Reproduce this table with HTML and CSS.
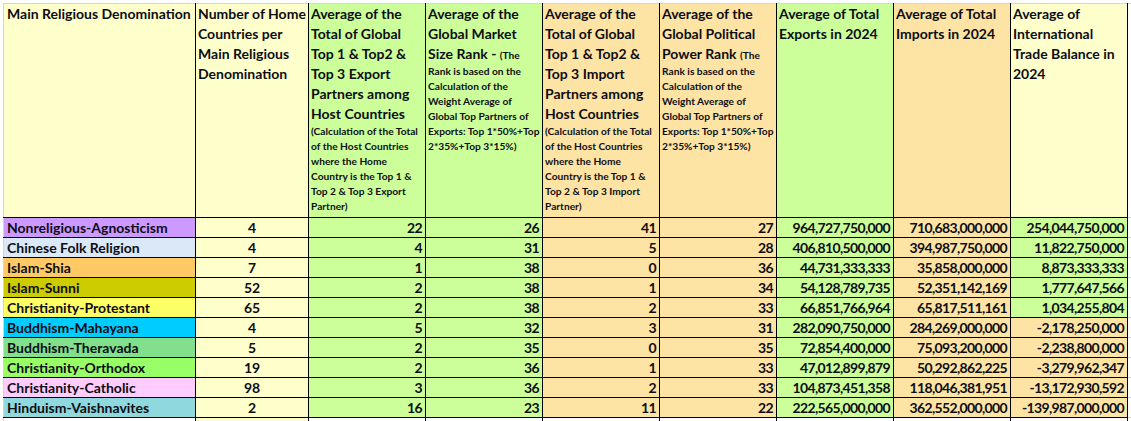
FILE: index.html
```html
<!DOCTYPE html>
<html lang="en">
<head>
<meta charset="utf-8">
<title>Religious Denomination Trade Table</title>
<link rel="stylesheet" href="styles.css">
</head>
<body>
<div class="sheet">
<table class="grid">
  <colgroup>
    <col class="c-name"><col class="c-num"><col class="c-std"><col class="c-std"><col class="c-std"><col class="c-std"><col class="c-std"><col class="c-std"><col class="c-std"><col class="c-extra">
  </colgroup>
  <thead>
    <tr class="head">
      <th class="yel"><span class="big">Main Religious Denomination</span></th>
      <th class="yel"><span class="big">Number of Home<br>Countries per<br>Main Religious<br>Denomination</span></th>
      <th class="grn"><span class="big">Average of the<br>Total of Global<br>Top 1 &amp; Top2 &amp;<br>Top 3 Export<br>Partners among<br>Host Countries</span><br>(Calculation of the Total<br>of the Host Countries<br>where the Home<br>Country is the Top 1 &amp;<br>Top 2 &amp; Top 3 Export<br>Partner)</th>
      <th class="grn active"><span class="big">Average of the<br>Global Market<br>Size Rank - </span>(The<br>Rank is based on the<br>Calculation of the<br>Weight Average of<br>Global Top Partners of<br>Exports: Top 1*50%+Top<br>2*35%+Top 3*15%)</th>
      <th class="tan"><span class="big">Average of the<br>Total of Global<br>Top 1 &amp; Top2 &amp;<br>Top 3 Import<br>Partners among<br>Host Countries</span><br>(Calculation of the Total<br>of the Host Countries<br>where the Home<br>Country is the Top 1 &amp;<br>Top 2 &amp; Top 3 Import<br>Partner)</th>
      <th class="tan"><span class="big">Average of the<br>Global Political<br>Power Rank </span>(The<br>Rank is based on the<br>Calculation of the<br>Weight Average of<br>Global Top Partners of<br>Exports: Top 1*50%+Top<br>2*35%+Top 3*15%)</th>
      <th class="grn"><span class="big">Average of Total<br>Exports in 2024</span></th>
      <th class="tan"><span class="big">Average of Total<br>Imports in 2024</span></th>
      <th class="yel"><span class="big">Average of<br>International<br>Trade Balance in<br>2024</span></th>
      <th class="blank"></th>
    </tr>
  </thead>
  <tbody>
    <tr><td class="name r-lav">Nonreligious-Agnosticism</td><td class="cnt">4</td><td class="grn">22</td><td class="grn">26</td><td class="tan">41</td><td class="tan">27</td><td class="grn">964,727,750,000</td><td class="tan">710,683,000,000</td><td class="grn">254,044,750,000</td><td class="blank"></td></tr>
    <tr><td class="name r-sky">Chinese Folk Religion</td><td class="cnt">4</td><td class="grn">4</td><td class="grn">31</td><td class="tan">5</td><td class="tan">28</td><td class="grn">406,810,500,000</td><td class="tan">394,987,750,000</td><td class="grn">11,822,750,000</td><td class="blank"></td></tr>
    <tr><td class="name r-org">Islam-Shia</td><td class="cnt">7</td><td class="grn">1</td><td class="grn">38</td><td class="tan">0</td><td class="tan">36</td><td class="grn">44,731,333,333</td><td class="tan">35,858,000,000</td><td class="grn">8,873,333,333</td><td class="blank"></td></tr>
    <tr><td class="name r-olv">Islam-Sunni</td><td class="cnt">52</td><td class="grn">2</td><td class="grn">38</td><td class="tan">1</td><td class="tan">34</td><td class="grn">54,128,789,735</td><td class="tan">52,351,142,169</td><td class="grn">1,777,647,566</td><td class="blank"></td></tr>
    <tr><td class="name r-yel">Christianity-Protestant</td><td class="cnt">65</td><td class="grn">2</td><td class="grn">38</td><td class="tan">2</td><td class="tan">33</td><td class="grn">66,851,766,964</td><td class="tan">65,817,511,161</td><td class="grn">1,034,255,804</td><td class="blank"></td></tr>
    <tr><td class="name r-cyn">Buddhism-Mahayana</td><td class="cnt">4</td><td class="grn">5</td><td class="grn">32</td><td class="tan">3</td><td class="tan">31</td><td class="grn">282,090,750,000</td><td class="tan">284,269,000,000</td><td class="tan">-2,178,250,000</td><td class="blank"></td></tr>
    <tr><td class="name r-mnt">Buddhism-Theravada</td><td class="cnt">5</td><td class="grn">2</td><td class="grn">35</td><td class="tan">0</td><td class="tan">35</td><td class="grn">72,854,400,000</td><td class="tan">75,093,200,000</td><td class="tan">-2,238,800,000</td><td class="blank"></td></tr>
    <tr><td class="name r-lim">Christianity-Orthodox</td><td class="cnt">19</td><td class="grn">2</td><td class="grn">36</td><td class="tan">1</td><td class="tan">33</td><td class="grn">47,012,899,879</td><td class="tan">50,292,862,225</td><td class="tan">-3,279,962,347</td><td class="blank"></td></tr>
    <tr><td class="name r-pnk">Christianity-Catholic</td><td class="cnt">98</td><td class="grn">3</td><td class="grn">36</td><td class="tan">2</td><td class="tan">33</td><td class="grn">104,873,451,358</td><td class="tan">118,046,381,951</td><td class="tan">-13,172,930,592</td><td class="blank"></td></tr>
    <tr><td class="name r-tea">Hinduism-Vaishnavites</td><td class="cnt">2</td><td class="grn">16</td><td class="grn">23</td><td class="tan">11</td><td class="tan">22</td><td class="grn">222,565,000,000</td><td class="tan">362,552,000,000</td><td class="tan">-139,987,000,000</td><td class="blank"></td></tr>
    <tr class="tail"><td class="name"></td><td class="cnt"></td><td></td><td></td><td></td><td></td><td></td><td></td><td></td><td class="blank"></td></tr>
  </tbody>
</table>
</div>
</body>
</html>
```

FILE: styles.css
```css
html, body {
  margin: 0;
  padding: 0;
  background: #ffffff;
  overflow: hidden;
}

.sheet {
  padding: 3px 0 0 3px;
  font-family: Lato, "Open Sans", sans-serif;
  font-weight: 700;
  color: #0d0d14;
}

.grid {
  border-collapse: collapse;
  table-layout: fixed;
  width: 1134px;
}

.c-name { width: 192px; }
.c-num { width: 113px; }
.c-std { width: 117px; }
.c-extra { width: 10px; }

.grid th,
.grid td {
  border: 1px solid #000000;
  padding: 0 3px 0 3px;
  overflow: hidden;
  white-space: nowrap;
}

.head th {
  height: 213px;
  vertical-align: top;
  text-align: left;
  font-size: 10.2px;
  line-height: 15px;
  font-weight: 700;
  padding-left: 2px;
  padding-right: 0;
  border-top-color: #d4d4d4;
}

.head th:first-child {
  border-left-color: #d4d4d4;
  padding-left: 3px;
}

.big {
  font-size: 14px;
  line-height: 20px;
}

.active {
  box-shadow: 0 -2px 0 #217346;
}

.grid tbody td {
  height: 19px;
  font-size: 14px;
  line-height: 19px;
  vertical-align: bottom;
  text-align: right;
  letter-spacing: -0.65px;
}

.grid tbody td.name {
  text-align: left;
  padding-left: 3px;
  letter-spacing: 0;
  border-left-color: #d4d4d4;
}

.grid tbody td.cnt {
  text-align: center;
  letter-spacing: 0;
  background: #ffffcc;
}

.yel { background: #ffffcc; }
.grn { background: #ccff99; }
.tan { background: #fde4a4; }

.r-lav { background: #cc99ff; }
.r-sky { background: #dbe8f7; }
.r-org { background: #ffc966; }
.r-olv { background: #cccc00; }
.r-yel { background: #ffff66; }
.r-cyn { background: #00ccff; }
.r-mnt { background: #82e08c; }
.r-lim { background: #99ff66; }
.r-pnk { background: #ffccff; }
.r-tea { background: #8fd8dd; }

.grid .blank {
  background: #ffffff;
  border-right-color: #d4d4d4;
  border-top-color: #d4d4d4;
  border-bottom-color: #d4d4d4;
}

.grid tr.tail td {
  background: #ffffff;
  border-bottom-color: #d4d4d4;
}

.grid tr.tail td.cnt {
  background: #ffffcc;
}
```
